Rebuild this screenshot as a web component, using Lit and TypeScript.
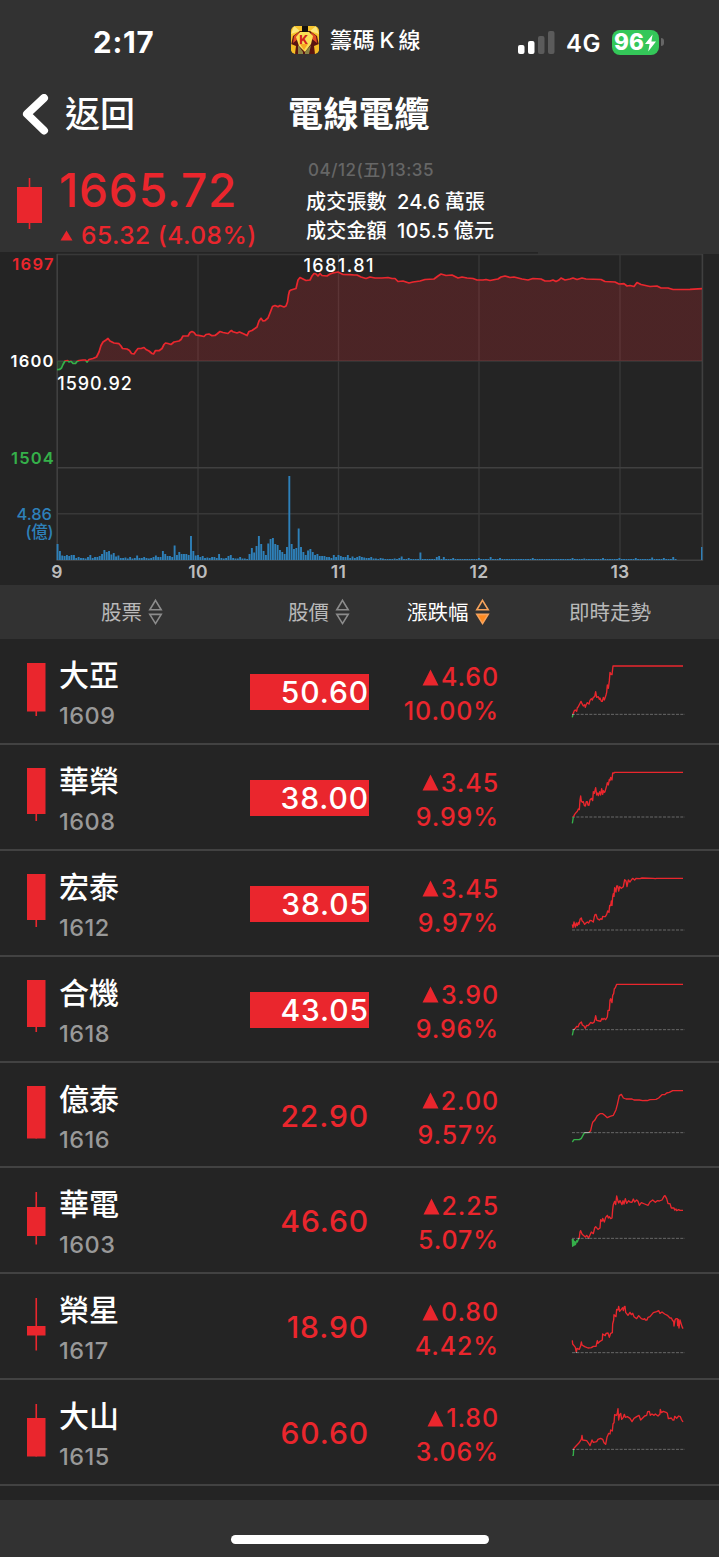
import { LitElement, html, svg, css } from 'lit';
import { customElement, property } from 'lit/decorators.js';
import { classMap } from 'lit/directives/class-map.js';

interface Stock {
    name: string;
    code: string;
    price: string;
    limitUp?: boolean;
    change: string;
    percent: string;
    // high, body top, body bottom, low
    candle: number[];
    base: number;
    trend: string;
}

const STOCKS: Stock[] = [
    {
        name: '大亞', code: '1609', price: '50.60', limitUp: true, change: '4.60', percent: '10.00%',
        candle: [0, 0, 48.5, 53], base: 226,
        trend: '7,235 9,225 13,215 16,213 20,217 22,206 25,203 29,195 33,187 36,194 40,201 44,197 46,205 48,198 52,191 57,195 60,184 64,179 67,183 70,175 74,173 77,158 80,175 85,173 88,181 90,177 94,187 97,187 100,175 103,183 108,168 110,160 112,138 115,148 118,125 120,100 123,106 126,107 129,81 339,81'
    },
    {
        name: '華榮', code: '1608', price: '38.00', limitUp: true, change: '3.45', percent: '9.99%',
        candle: [0, 0, 46, 53], base: 216,
        trend: '7,235 10,216 14,208 18,203 22,199 25,192 28,194 30,165 32,153 34,168 37,172 40,170 43,182 46,183 49,170 52,170 54,180 57,181 60,165 64,160 68,167 70,140 73,145 77,128 80,150 83,144 85,152 89,140 92,150 95,131 98,148 100,137 103,142 105,140 110,122 112,113 115,120 118,103 120,107 122,97 126,105 128,84 132,84 134,82 339,82'
    },
    {
        name: '宏泰', code: '1612', price: '38.05', limitUp: true, change: '3.45', percent: '9.97%',
        candle: [0, 0, 46, 53], base: 237,
        trend: '7,220 9,230 12,213 16,228 19,216 22,224 25,214 27,220 30,205 34,201 36,209 40,213 44,220 48,216 52,213 56,216 60,208 65,209 70,213 73,197 75,191 78,190 82,203 88,207 92,203 96,205 98,196 102,197 106,197 110,190 113,180 117,184 119,163 122,164 124,150 126,163 128,138 130,128 132,136 134,110 138,123 140,105 143,105 146,120 149,107 154,112 160,107 164,86 168,90 171,107 175,87 180,93 184,87 188,82 194,87 198,82 210,83 216,81 250,82 256,83 260,82 339,82'
    },
    {
        name: '合機', code: '1618', price: '43.05', limitUp: true, change: '3.90', percent: '9.96%',
        candle: [0, 0, 47, 52], base: 218,
        trend: '7,235 10,220 13,216 16,214 20,208 24,210 28,200 34,195 37,204 42,207 46,214 50,205 54,206 58,202 62,196 66,199 72,196 75,186 77,176 80,190 88,192 92,193 96,184 99,188 102,184 107,188 112,180 114,160 118,160 120,130 122,125 126,137 128,115 131,110 133,95 136,92 140,82 339,82'
    },
    {
        name: '億泰', code: '1616', price: '22.90', change: '2.00', percent: '9.57%',
        candle: [0, 0, 52.5, 52.5], base: 209,
        trend: '7,237 12,230 28,230 34,226 42,211 45,209 56,209 62,203 66,185 68,178 74,172 82,158 90,152 98,152 104,157 112,164 120,160 130,157 138,140 142,125 148,98 154,94 160,105 168,108 186,108 192,111 208,111 218,113 228,112 232,113 240,110 258,109 266,105 276,95 284,95 290,90 298,88 308,83 339,83'
    },
    {
        name: '華電', code: '1603', price: '46.60', change: '2.25', percent: '5.07%',
        candle: [0, 15, 44, 52.5], base: 211,
        trend: '7,213 8,235 10,215 12,232 14,220 16,230 20,218 22,222 25,214 28,208 30,192 32,188 36,198 40,202 46,207 50,202 56,210 64,192 70,197 74,180 77,176 84,184 90,180 92,155 96,160 98,151 103,162 107,148 112,142 115,150 118,146 122,152 126,150 128,125 130,110 134,100 137,110 140,84 144,100 146,105 150,98 156,110 159,98 162,108 166,92 170,106 176,98 180,102 186,103 190,93 194,102 200,96 204,100 208,112 214,104 224,108 234,112 240,102 248,96 256,103 262,98 268,99 276,96 282,85 285,83 290,92 294,107 300,107 304,120 312,120 314,126 318,123 320,128 326,125 330,127 339,127'
    },
    {
        name: '榮星', code: '1617', price: '18.90', change: '0.80', percent: '4.42%',
        candle: [0, 28, 37.5, 52.5], base: 236,
        trend: '7,199 8,210 12,215 16,220 19,235 21,223 28,226 32,215 34,204 36,213 44,218 54,222 64,221 70,217 78,217 82,200 84,208 90,202 97,198 98,180 106,185 108,178 114,177 118,190 122,178 127,176 128,150 131,138 132,122 138,128 140,106 144,108 146,97 149,112 154,106 158,101 160,110 163,98 165,97 167,115 174,124 180,115 184,122 188,118 192,128 200,134 206,125 214,134 220,136 224,134 226,138 231,138 234,130 240,128 250,116 260,113 266,110 270,118 276,114 284,120 292,124 300,132 304,132 308,140 311,142 312,156 315,138 318,134 322,134 323,155 325,136 327,162 330,138 336,158 339,164'
    },
    {
        name: '大山', code: '1615', price: '60.60', change: '1.80', percent: '3.06%',
        candle: [0, 14, 52.5, 52.5], base: 208,
        trend: '7,226 10,226 11,206 18,198 26,190 30,184 34,178 36,166 38,180 50,182 56,190 60,197 66,180 70,187 80,185 84,178 92,175 98,178 102,188 107,193 111,172 116,160 120,162 122,150 127,153 129,132 132,128 134,104 140,106 142,98 144,86 146,120 149,104 152,100 155,118 160,112 163,103 166,112 172,110 180,115 186,125 192,115 200,110 207,106 212,120 218,114 224,108 230,106 233,95 238,94 241,106 246,102 252,106 256,102 264,108 270,102 271,88 274,98 280,94 288,97 292,100 295,116 304,114 308,120 312,120 314,109 320,115 326,108 331,110 334,118 339,126'
    }
];

const INDEX_TREND =
    '57,117.7 59.5,117.5 61.5,116 63,112.5 65,109 67.5,108.5 69,110 71,109.3 73,111.5 75.5,111.5 77,109.5 79,108.5 83,108 85.5,108 87,110 89,107.5 93,106.5 96.5,105 99,100 101,93.5 103,90 106,88 108,86.5 110,89 114,91 119,91.7 121,94 122.5,96.5 127,97 129.5,98.5 131.5,101.5 134,102 136,99 138,96.5 141,96.5 144,95.5 146,97.5 149,99 152,101.5 153.5,102 155.5,98.5 159,98.7 162,96.5 164,92.5 165.5,91 168,91.5 171,92.5 174,90 179,89 181,87.5 183,84 188,84 190,80.5 192,79.5 194,80.5 196,83 200,83.7 204,84.5 206,82.5 209,82 212,83.7 215,83.5 217,82 220,79.5 223,80.5 228,81.5 230,79.5 231.5,78.5 233,79.8 237,81 239.5,80 244,82 247,83.5 249,79.5 252,78.5 257,75 259,69 261,66.3 263,69 265,68.7 268,66 270,61 272.5,54.5 275,53.5 278,54.8 280,53.5 284,55 286,54 287.5,50 288.5,43 289.5,39 291,38 296,36.5 298,28 300,25.5 303,27 306,28.5 310,28 312,24 314,21.5 316,22 318,24 320,21.5 322,23.5 327,24 330,22 333,21 338,20 343,22.5 350,22.7 354,23 357,23 361,25 366,26.5 370,25 375,26 382,26 388,25.5 392,26.5 395,26.5 398,29.5 403,29 406,30 409,31 413,30 420,29 425,27.5 434,27 438,24 441,22 446,23.5 452,23 458,26 462,25 467,26 473,26.5 477,28 483,28 486,27.5 490,28.5 495,27.5 498,27 501,25 505,24 510,25.5 514,25 518,26 522,27 528,28 533,26.5 541,27 545,29 550,29 553,28 556,29.5 559,28 561,26 565,28 570,27 573,26 577,27.5 582,26 586,27 601,27.5 605,29.5 615,30 619,32 624,31.7 627,34 630,33.5 634,34.5 637,30.5 641,32.5 650,34.5 657,34 661,36 668,36 673,37.5 690,37.3 702,36.7';

// one bar per minute from 9:00, quiet minutes in the afternoon are filled with 1
const VOLUME_MORNING = [
    16, 9, 4.5, 4, 5, 4, 5, 5, 2, 3, 2, 2, 1.5, 3, 5, 2, 3, 3, 4, 6,
    10, 8, 9, 5.5, 7, 3.5, 4.5, 2, 2, 2.5, 1.5, 3, 1.5, 2, 4.5, 2, 2, 3, 2, 1.5,
    2, 3, 4.5, 3, 3, 9, 6, 4, 4, 3, 14.5, 5, 8, 6, 6, 6, 5, 24, 9, 4.5,
    5, 3, 4, 2, 2.5, 2, 3, 3, 2, 6, 2, 1.5, 2, 4, 5, 2, 1.5, 1.5, 3, 1.5,
    1.5, 1, 6, 12, 7.5, 14, 24, 16, 9, 5, 16.5, 21, 22, 16, 15, 10, 8, 6, 13, 84,
    16, 11, 12, 31.5, 13, 8, 5, 9.5, 11, 8, 5, 6, 4, 4, 4, 3, 3, 2, 5, 3,
    5, 4, 3, 3, 5, 2, 3.5, 2, 3, 4, 3, 2.5, 2, 2, 3, 1.5, 1.5, 1, 2, 1.5
];
const VOLUME_SPIKES: Record<number, number> = {
    144: 1.5, 146: 2, 147: 3.5, 150: 2, 155: 7.5, 162: 3, 163: 4, 165: 3, 169: 2, 180: 2,
    185: 3, 189: 2, 203: 2, 220: 2, 225: 1.5, 233: 2, 240: 2, 247: 2, 254: 2.5, 259: 2, 263: 3
};
const VOLUME = Array.from({ length: 265 }, (_, i) => VOLUME_MORNING[i] ?? VOLUME_SPIKES[i] ?? 1);

@customElement('stock-candle')
export class StockCandle extends LitElement {
    @property({ type: Array }) values: number[] = [0, 0, 0, 0];
    @property({ type: Number }) width = 18.5;

    static styles = css`
        :host {
            display: block;
        }
        svg {
            display: block;
            fill: #ea262d;
        }
    `;

    render() {
        const [high, top, bottom, low] = this.values;
        return html`
            <svg width=${this.width} height="54">
                <rect x=${this.width / 2 - 0.8} y=${high} width="1.6" height=${low - high}></rect>
                <rect x="0" y=${top} width=${this.width} height=${bottom - top}></rect>
            </svg>
        `;
    }
}

@customElement('trend-line')
export class TrendLine extends LitElement {
    @property() points = '';
    @property({ type: Number }) base = 0;

    static styles = css`
        :host {
            display: block;
        }
        svg {
            display: block;
        }
        .base {
            stroke: #686868;
            stroke-width: 3;
            stroke-dasharray: 9 4;
        }
        .trend {
            fill: none;
            stroke: url(#side);
            stroke-width: 4;
            stroke-linejoin: round;
        }
    `;

    render() {
        const at = (y: number) => y / 300;
        return html`
            <svg width="117" height="100" viewBox="0 0 351 300">
                <defs>
                    <linearGradient id="side" gradientUnits="userSpaceOnUse" x1="0" y1="0" x2="0" y2="300">
                        <stop offset=${at(this.base - 1)} stop-color="#ea262d"></stop>
                        <stop offset=${at(this.base - 1)} stop-color="#aaa"></stop>
                        <stop offset=${at(this.base + 1)} stop-color="#aaa"></stop>
                        <stop offset=${at(this.base + 1)} stop-color="#35b04a"></stop>
                    </linearGradient>
                </defs>
                <line class="base" x1="6" x2="345" y1=${this.base} y2=${this.base}></line>
                <polyline class="trend" points=${this.points}></polyline>
            </svg>
        `;
    }
}

@customElement('sort-arrows')
export class SortArrows extends LitElement {
    @property({ type: Boolean }) active = false;

    static styles = css`
        :host {
            display: block;
        }
        svg {
            display: block;
            fill: none;
            stroke: #8c8c8c;
            stroke-width: 1.6;
        }
        .active {
            stroke: #f6a35c;
        }
        .active .down {
            fill: #ff8a1f;
            stroke: #f6a35c;
        }
    `;

    render() {
        return html`
            <svg class=${classMap({ active: this.active })} width="15" height="28" viewBox="0 0 15 28">
                <path d="M7.5 2.4 L13.2 11.8 H1.8 Z"></path>
                <path class="down" d="M7.5 25.6 L13.2 16.4 H1.8 Z"></path>
            </svg>
        `;
    }
}

@customElement('index-chart')
export class IndexChart extends LitElement {
    static styles = css`
        :host {
            display: block;
            height: 333px;
            background: #242424;
        }
        svg {
            display: block;
            font-family: Inter, 'Noto Sans CJK TC', sans-serif;
            font-weight: 600;
            font-size: 16.5px;
        }
        .edge {
            fill: #323232;
        }
        .grid {
            stroke: #383838;
            stroke-width: 1.4;
        }
        .frame {
            stroke: #404040;
            stroke-width: 1.6;
        }
        .area {
            fill: url(#area);
        }
        .trend {
            fill: none;
            stroke: url(#side);
            stroke-width: 1.7;
            stroke-linejoin: round;
        }
        .volume {
            fill: #2e80b9;
        }
        .up {
            fill: #ea262d;
        }
        .down {
            fill: #35b04a;
        }
        .blue {
            fill: #2e80b9;
            font-weight: 500;
        }
        .white {
            fill: #fff;
        }
        .peak {
            font-size: 18px;
            font-weight: 500;
        }
        .hour {
            fill: #bdbdbd;
            text-anchor: middle;
            font-size: 17.5px;
            letter-spacing: 0.3px;
        }
    `;

    label(text: string, x: number, y: number, length: number, cls: string) {
        return svg`<text class=${cls} x=${x} y=${y} textLength=${length}>${text}</text>`;
    }

    bar(height: number, i: number) {
        return svg`<rect x=${56.6 + i * 2.341} y=${308 - height} width="1.9" height=${height}></rect>`;
    }

    render() {
        const hours = [57, 198, 338.5, 479, 620];
        return html`
            <svg width="719" height="333" viewBox="0 0 719 333">
                <defs>
                    <linearGradient id="side" gradientUnits="userSpaceOnUse" x1="0" y1="0" x2="0" y2="218">
                        <stop offset="0.5" stop-color="#ea262d"></stop>
                        <stop offset="0.5" stop-color="#35b04a"></stop>
                    </linearGradient>
                    <linearGradient id="area" gradientUnits="userSpaceOnUse" x1="0" y1="0" x2="0" y2="218">
                        <stop offset="0.5" stop-color="#ea262d" stop-opacity="0.2"></stop>
                        <stop offset="0.5" stop-color="#35b04a" stop-opacity="0.2"></stop>
                    </linearGradient>
                </defs>
                <rect class="edge" x="538" y="0" width="181" height="2"></rect>
                ${hours.slice(1).map(x => svg`<line class="grid" x1=${x} x2=${x} y1="2.5" y2="308"></line>`)}
                ${[2.5, 109, 261.7].map(y => svg`<line class="grid" x1="57" x2="702" y1=${y} y2=${y}></line>`)}
                <path class="frame" d="M57.2 2 V308.3 H702.4 V2 M57 215.8 H702" fill="none"></path>
                <polygon class="area" points="57,109 ${INDEX_TREND} 702,109"></polygon>
                <polyline class="trend" points=${INDEX_TREND}></polyline>
                <g class="volume">
                    ${VOLUME.map((v, i) => this.bar(v, i))}
                    <rect x="701" y="295" width="1.4" height="13"></rect>
                </g>
                ${this.label('1697', 12.2, 18.3, 41.3, 'up')}
                ${this.label('1600', 10.6, 115.2, 42.8, 'white')}
                ${this.label('1504', 11, 212, 42.8, 'down')}
                ${this.label('4.86', 16.5, 268, 35.5, 'blue')}
                ${this.label('(億)', 25.5, 286, 28, 'blue')}
                ${this.label('1590.92', 57.3, 137.7, 74.5, 'white peak')}
                ${this.label('1681.81', 303.4, 19.7, 70, 'white peak')}
                ${hours.map((x, i) => svg`<text class="hour" x=${x} y="326.3">${9 + i}</text>`)}
            </svg>
        `;
    }
}

@customElement('app-root')
export class AppRoot extends LitElement {
    static styles = css`
        :host {
            display: flex;
            flex-direction: column;
            width: 719px;
            height: 1557px;
            overflow: hidden;
            background: #323232;
            color: #fff;
            font-family: Inter, 'Noto Sans CJK TC', sans-serif;
            font-weight: 500;
            line-height: 1;
            white-space: nowrap;
        }
        svg {
            display: block;
        }
        .status {
            display: grid;
            grid-template-columns: 93px 198px 227px 1fr;
            height: 80px;
            box-sizing: border-box;
            padding-top: 26px;
        }
        .clock {
            grid-column: 2;
            padding-top: 2px;
            font-size: 29.5px;
            font-weight: 700;
            letter-spacing: 0.8px;
        }
        .app-name {
            display: flex;
            gap: 11px;
            font-size: 22px;
        }
        .app-name span {
            padding-top: 3px;
            letter-spacing: 0.8px;
        }
        .app-name .latin {
            padding: 0 3px 0 4px;
        }
        .logo-letter {
            font: 800 12px Inter, sans-serif;
            fill: #d2221c;
            text-anchor: middle;
        }
        .signals {
            display: flex;
        }
        .network {
            flex: none;
            width: 57px;
            box-sizing: border-box;
            padding: 6px 0 0 11px;
            font-size: 24px;
            font-weight: 600;
            letter-spacing: 0.4px;
        }
        .battery {
            display: flex;
            flex: none;
            align-items: center;
            width: 47px;
            height: 25px;
            margin-top: 4px;
            border-radius: 8px;
            background: #34c759;
            box-sizing: border-box;
            padding-left: 2px;
            font-size: 22.5px;
            font-weight: 800;
        }
        .nub {
            flex: none;
            width: 3px;
            height: 8px;
            margin: 12px 0 0 2px;
            border-radius: 0 3px 3px 0;
            background: #666;
        }
        .nav {
            display: grid;
            grid-template-columns: 65px 223px 1fr;
            align-items: center;
            height: 70px;
            font-size: 35px;
        }
        .nav svg {
            margin-left: 22px;
        }
        .nav span {
            margin-top: -2px;
        }
        .title {
            font-weight: 600;
            letter-spacing: 0.4px;
        }
        .summary {
            display: grid;
            grid-template-columns: 60px 246px 1fr;
            height: 102px;
        }
        .summary stock-candle {
            margin: 28px 0 0 17px;
        }
        .index {
            color: #ea262d;
        }
        .index-value {
            margin-left: -1px;
            padding-top: 17px;
            font-size: 46px;
            letter-spacing: 0.9px;
        }
        .index-change {
            display: flex;
            gap: 8px;
            align-items: center;
            padding-top: 10px;
            font-size: 24.5px;
            letter-spacing: 0.5px;
        }
        .date {
            padding: 12px 0 0 2px;
            color: #666;
            font-size: 17px;
            letter-spacing: 0.5px;
        }
        .turnover {
            display: grid;
            grid-template-columns: 91px 1fr;
            grid-auto-rows: 29px;
            align-items: center;
            padding-top: 8px;
            font-size: 20px;
            letter-spacing: 0.2px;
        }
        .turnover span {
            word-spacing: -1px;
        }
        .head {
            display: grid;
            grid-template-columns: 101px 187px 119px 162px 1fr;
            align-items: center;
            height: 54px;
            flex: none;
            color: #b9b9b9;
            font-size: 20.5px;
            font-weight: 400;
        }
        .col {
            display: flex;
            align-items: center;
            gap: 6px;
        }
        .col span {
            padding-top: 2px;
        }
        .col.sorted {
            color: #fff;
        }
        .list {
            flex: none;
            height: 861px;
            background: #242424;
        }
        .row {
            display: grid;
            grid-template-columns: 59px 191px 119px 130px 1fr;
            height: 105.9px;
            box-sizing: border-box;
            border-bottom: 2px solid #424242;
        }
        .row stock-candle {
            margin: 23.5px 0 0 27px;
        }
        .name {
            padding-top: 21px;
            font-size: 30px;
        }
        .code {
            padding-top: 14px;
            color: #999;
            font-size: 23.5px;
            letter-spacing: 0.5px;
        }
        .price {
            height: 36px;
            margin-top: 35px;
            color: #ea262d;
            font-size: 30px;
            line-height: 36px;
            letter-spacing: 0.9px;
            text-align: right;
        }
        .price.limit {
            background: #ea262d;
            color: #fff;
        }
        .change {
            padding-top: 21px;
            color: #ea262d;
            font-size: 25px;
            line-height: 34px;
            letter-spacing: 0.9px;
            text-align: right;
        }
        .delta {
            display: flex;
            justify-content: flex-end;
            align-items: center;
            gap: 2px;
        }
        .row trend-line {
            margin-left: 71px;
        }
        .home {
            width: 258px;
            height: 9px;
            margin: 35px auto 0;
            border-radius: 5px;
            background: #fff;
        }
    `;

    renderStatus() {
        return html`
            <div class="status">
                <div class="clock">2:17</div>
                <div class="app-name">
                    <svg width="28" height="28" viewBox="0 0 28 28">
                        <defs>
                            <clipPath id="tile"><rect width="28" height="28" rx="5"></rect></clipPath>
                        </defs>
                        <g clip-path="url(#tile)">
                            <rect width="28" height="28" fill="#f8c42c"></rect>
                            <path d="M0 8 L9 5 L3 0 M28 8 L19 5 L25 0" fill="#fbe77c"></path>
                            <path d="M2 10 L9 5 H19 L26 10 L28 19 L24 28 H4 L0 19 Z" fill="#5a1510"></path>
                            <path d="M3 10 L8 6 L7 13 L2 17 Z M25 10 L20 6 L21 13 L26 17 Z" fill="#e04a25"></path>
                            <path d="M0 18 L5 20 L4 28 H0 Z M28 18 L23 20 L24 28 H28 Z" fill="#f5bd25"></path>
                            <path d="M9 6 H18 L22 10 L20 18 L14 26 L8 20 L5 11 Z" fill="#fbdf55"></path>
                            <path d="M7 19 L12 26 V28 H7 Z M20 19 L14 26 V28 H18 Z" fill="#8a8446"></path>
                            <path d="M9 18 H17 L13 24 Z" fill="#f7a823"></path>
                            <rect x="11" y="0" width="6" height="6" fill="#15110c"></rect>
                            <text class="logo-letter" x="12.6" y="18">K</text>
                        </g>
                    </svg>
                    <span>籌碼<span class="latin">K</span>線</span>
                </div>
                <div class="signals">
                    <svg width="37" height="30" viewBox="0 0 37 30">
                        <rect x="0" y="19" width="6.5" height="9" rx="2" fill="#fff"></rect>
                        <rect x="10" y="15" width="6.5" height="13" rx="2" fill="#fff"></rect>
                        <rect x="20" y="10" width="6.5" height="18" rx="2" fill="#5b5b5b"></rect>
                        <rect x="30" y="5" width="6.5" height="23" rx="2" fill="#5b5b5b"></rect>
                    </svg>
                    <div class="network">4G</div>
                    <div class="battery">
                        96
                        <svg width="13" height="18" viewBox="0 0 13 18">
                            <path d="M8.6 0.5 L1 10 H5.6 L4.2 17.5 L12 7.4 H7.4 Z" fill="#fff"></path>
                        </svg>
                    </div>
                    <div class="nub"></div>
                </div>
            </div>
        `;
    }

    renderSummary() {
        return html`
            <div class="summary">
                <stock-candle .values=${[0, 9, 45, 51]} .width=${25}></stock-candle>
                <div class="index">
                    <div class="index-value">1665.72</div>
                    <div class="index-change">
                        <svg width="13" height="11"><path d="M6.5 0.5 L12.5 10.5 H0.5 Z" fill="#ea262d"></path></svg>
                        <span>65.32 (4.08%)</span>
                    </div>
                </div>
                <div>
                    <div class="date">04/12(五)13:35</div>
                    <div class="turnover">
                        <span>成交張數</span><span>24.6 萬張</span>
                        <span>成交金額</span><span>105.5 億元</span>
                    </div>
                </div>
            </div>
        `;
    }

    renderRow(stock: Stock) {
        return html`
            <div class="row">
                <stock-candle .values=${stock.candle}></stock-candle>
                <div>
                    <div class="name">${stock.name}</div>
                    <div class="code">${stock.code}</div>
                </div>
                <div class=${classMap({ price: true, limit: !!stock.limitUp })}>${stock.price}</div>
                <div class="change">
                    <div class="delta">
                        <svg width="17" height="17"><path d="M8.5 0.5 L16.5 16.5 H0.5 Z" fill="#ea262d"></path></svg>
                        <span>${stock.change}</span>
                    </div>
                    <div>${stock.percent}</div>
                </div>
                <trend-line .points=${stock.trend} .base=${stock.base}></trend-line>
            </div>
        `;
    }

    render() {
        return html`
            ${this.renderStatus()}
            <div class="nav">
                <svg width="28" height="42" viewBox="0 0 28 42">
                    <path d="M22 4 L5 20 L22 36.5" fill="none" stroke="#fff" stroke-width="8"
                        stroke-linecap="round" stroke-linejoin="round"></path>
                </svg>
                <span>返回</span>
                <span class="title">電線電纜</span>
            </div>
            ${this.renderSummary()}
            <index-chart></index-chart>
            <div class="head">
                <span></span>
                <div class="col"><span>股票</span><sort-arrows></sort-arrows></div>
                <div class="col"><span>股價</span><sort-arrows></sort-arrows></div>
                <div class="col sorted"><span>漲跌幅</span><sort-arrows active></sort-arrows></div>
                <div class="col"><span>即時走勢</span></div>
            </div>
            <div class="list">${STOCKS.map(stock => this.renderRow(stock))}</div>
            <div class="home"></div>
        `;
    }
}
